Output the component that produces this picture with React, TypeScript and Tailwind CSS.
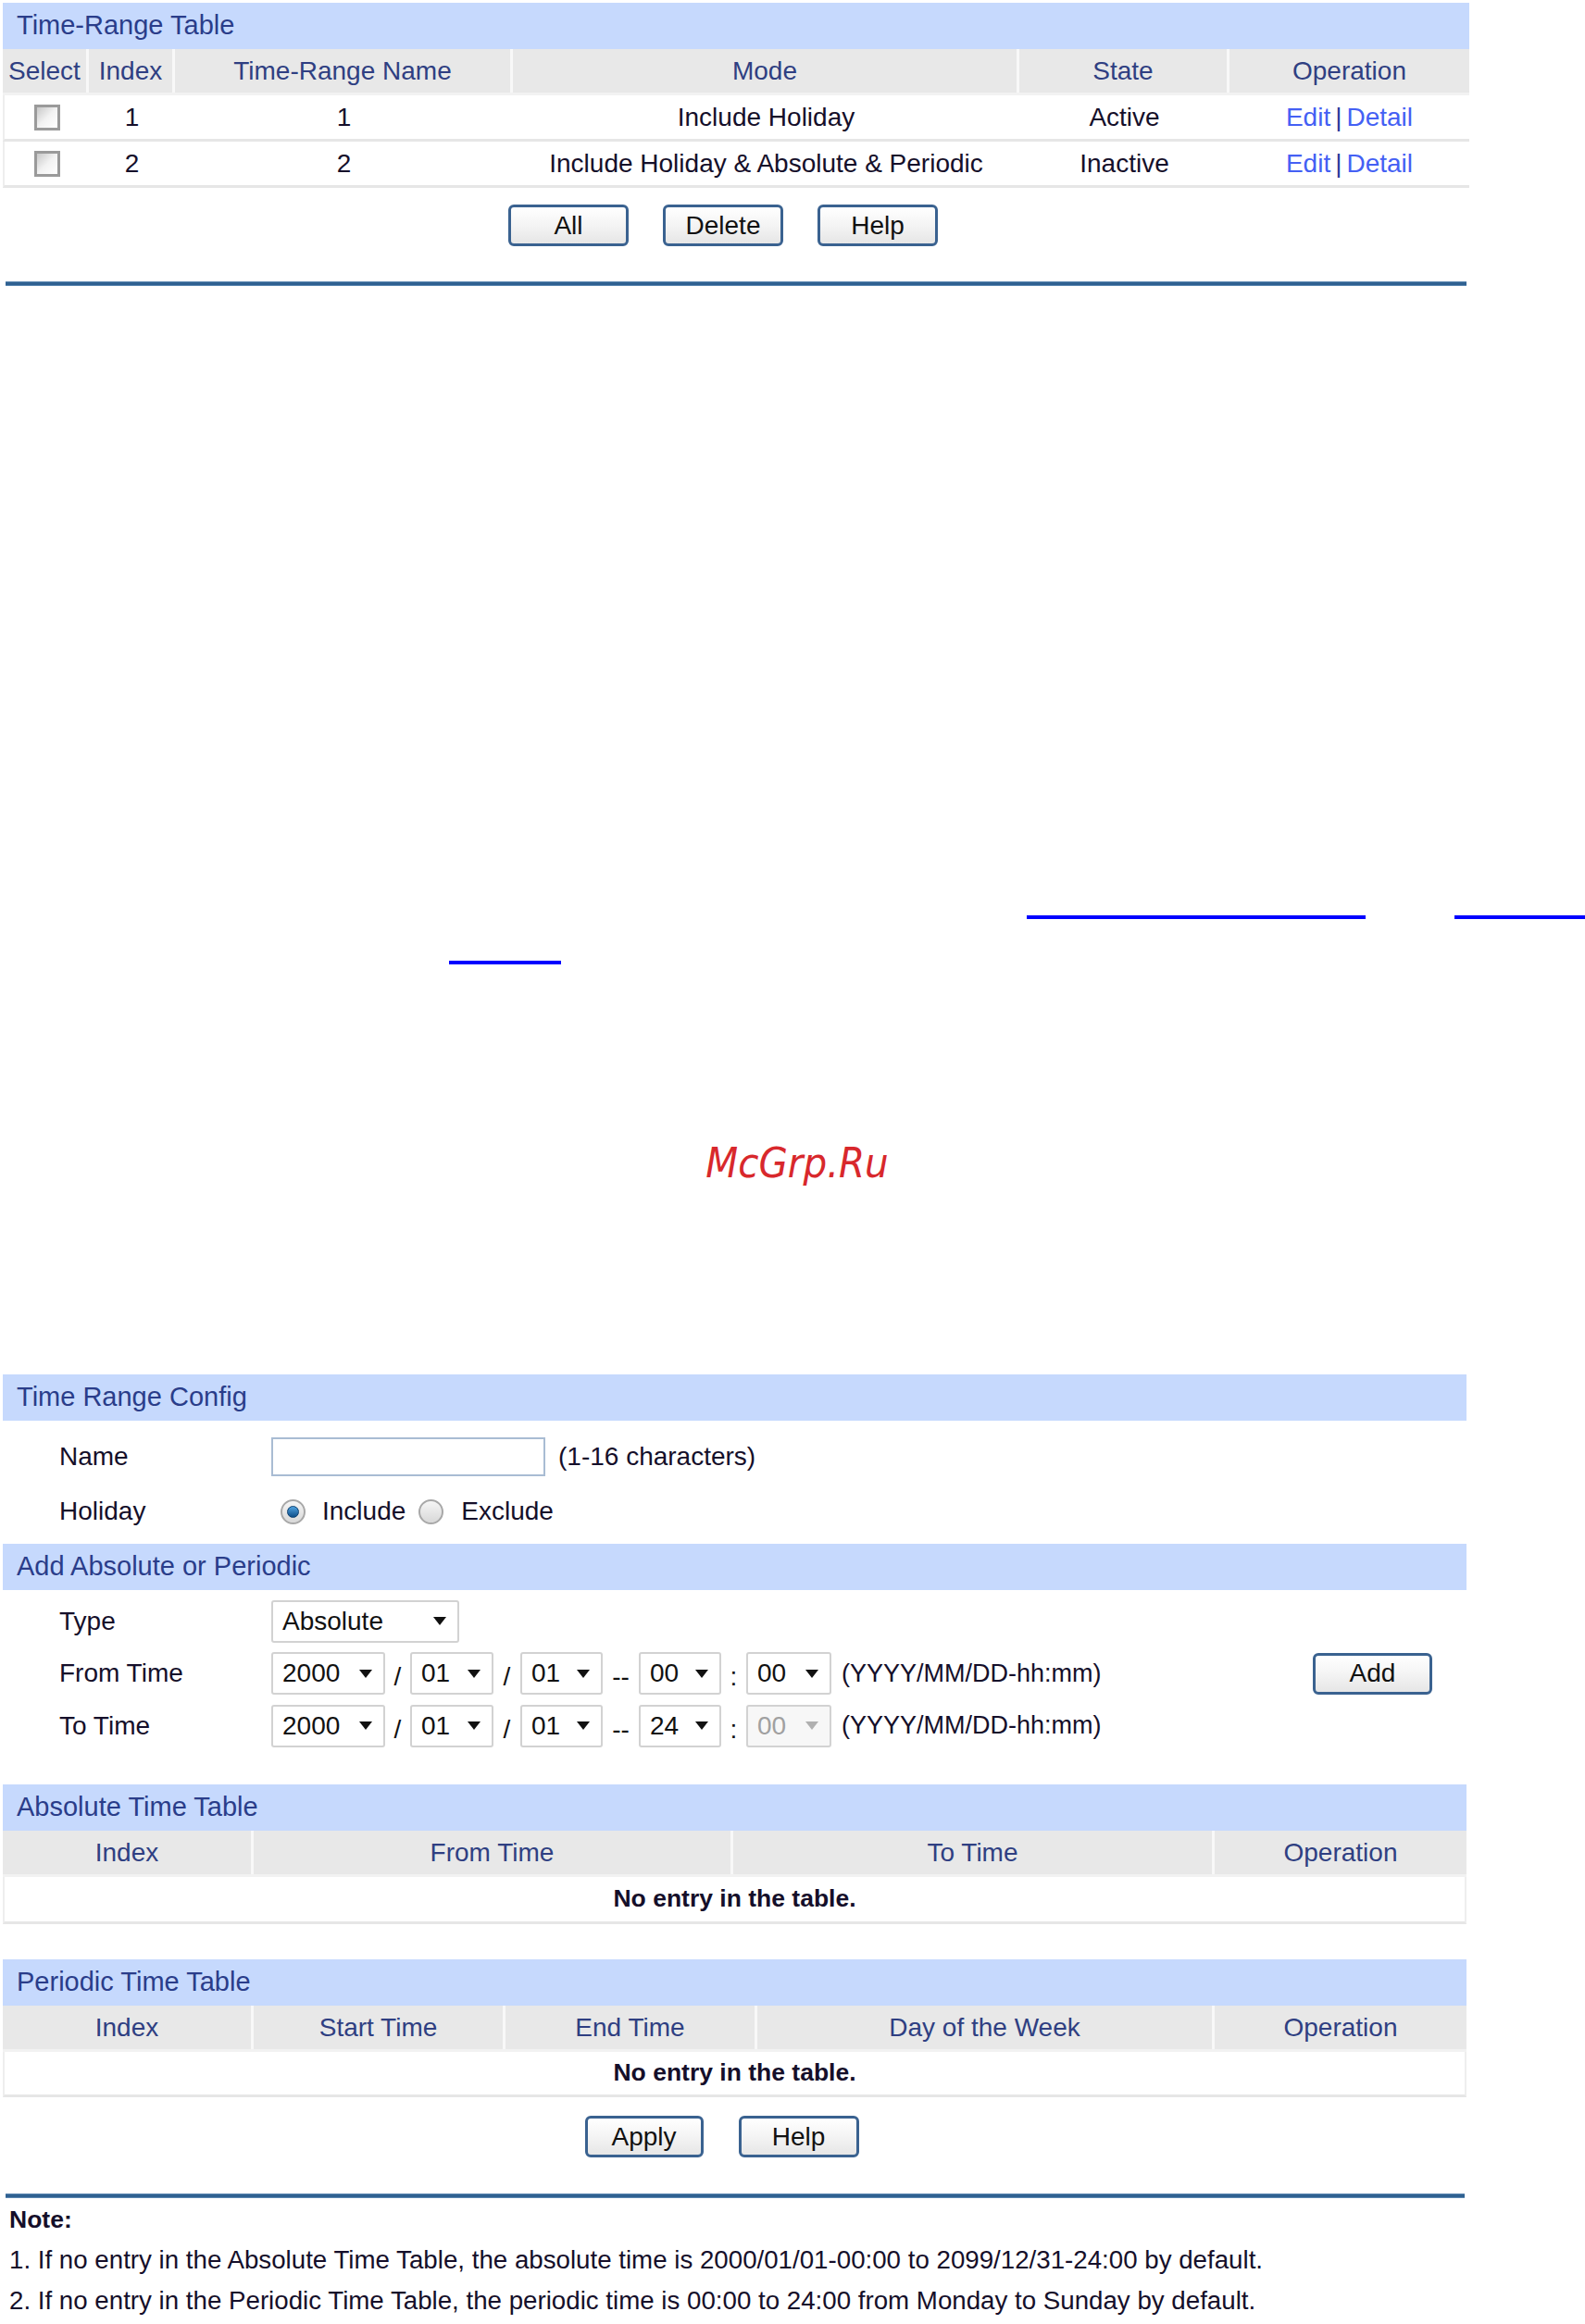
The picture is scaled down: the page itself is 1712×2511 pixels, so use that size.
import React from 'react';

const font = { fontFamily: '"Liberation Sans", Arial, sans-serif' };

function TitleBar({ title }: { title: string }) {
  return (
    <div className="h-[50px] bg-[#c6d9fd] pl-[15px] flex items-center text-[29px] text-[#2a3d8a]">
      {title}
    </div>
  );
}

function Btn({ label, w = 'w-[130px]' }: { label: string; w?: string }) {
  return (
    <div
      className={`${w} h-[45px] rounded-[6px] border-[3px] border-[#3a6290] bg-gradient-to-b from-[#ffffff] via-[#f4f4f4] to-[#e6e6e6] flex items-center justify-center text-[28px] text-[#111]`}
    >
      {label}
    </div>
  );
}

function Checkbox() {
  return (
    <div className="w-[28px] h-[28px] border-[3px] border-[#9a9a9a] bg-gradient-to-br from-[#c8c8c8] via-[#f2f2f2] to-[#ffffff]" />
  );
}

function Radio({ on }: { on?: boolean }) {
  return (
    <div className="w-[27px] h-[27px] rounded-full border-[2px] border-[#a8a8a8] bg-gradient-to-b from-[#f6f6f6] to-[#d8d8d8] flex items-center justify-center">
      {on && <div className="w-[13px] h-[13px] rounded-full bg-gradient-to-b from-[#4fa3e0] to-[#0c4f8a] border border-[#0a3e6e]" />}
    </div>
  );
}

function Select({ value, w, disabled }: { value: string; w: string; disabled?: boolean }) {
  return (
    <div
      className={`${w} h-[46px] rounded-[3px] border-[2px] border-[#d2d2d2] ${disabled ? 'bg-[#f7f7f7] text-[#a0a0a0]' : 'bg-white text-[#111]'} flex items-center justify-between pl-[10px] pr-[12px] text-[28px]`}
    >
      <span>{value}</span>
      <svg width="14" height="9" viewBox="0 0 14 9">
        <path d="M0 0 L14 0 L7 9 Z" fill={disabled ? '#b0b0b0' : '#111'} />
      </svg>
    </div>
  );
}

function Sep({ ch, w }: { ch: string; w: string }) {
  return <div className={`${w} text-center text-[28px] text-[#111] pt-[8px]`}>{ch}</div>;
}

function BlueRule() {
  return <div className="h-[5px] bg-[#2f6191] border-y border-[#5b86b0]" />;
}

export default function App() {
  const rows = [
    { idx: '1', name: '1', mode: 'Include Holiday', state: 'Active' },
    { idx: '2', name: '2', mode: 'Include Holiday & Absolute & Periodic', state: 'Inactive' },
  ];

  return (
    <div className="w-[1712px] h-[2511px] bg-white overflow-hidden" style={font}>
      {/* Time-Range Table */}
      <div className="pt-[3px] pl-[3px] w-[1587px]">
        <TitleBar title="Time-Range Table" />
        <div className="flex h-[50px] bg-[#e8e8e8] text-[28px] text-[#2f3f82] border-b-[3px] border-[#f2f2f2]">
          <div className="w-[93px] flex items-center justify-center border-r-[3px] border-[#f8f8f8]">Select</div>
          <div className="w-[93px] flex items-center justify-center border-r-[3px] border-[#f8f8f8]">Index</div>
          <div className="w-[365px] flex items-center justify-center border-r-[3px] border-[#f8f8f8]">Time-Range Name</div>
          <div className="w-[547px] flex items-center justify-center border-r-[3px] border-[#f8f8f8]">Mode</div>
          <div className="w-[227px] flex items-center justify-center border-r-[3px] border-[#f8f8f8]">State</div>
          <div className="flex-1 flex items-center justify-center">Operation</div>
        </div>
        {rows.map((r) => (
          <div key={r.idx} className="flex h-[50px] text-[28px] text-[#150f2a] border-b-[3px] border-[#e6e6e6] border-l-[2px] border-l-[#eeeeee]">
            <div className="w-[91px] flex items-center justify-center">
              <Checkbox />
            </div>
            <div className="w-[93px] flex items-center justify-center">{r.idx}</div>
            <div className="w-[365px] flex items-center justify-center">{r.name}</div>
            <div className="w-[547px] flex items-center justify-center">{r.mode}</div>
            <div className="w-[227px] flex items-center justify-center">{r.state}</div>
            <div className="flex-1 flex items-center justify-center text-[#4460f4]">
              <span>Edit</span>
              <span className="mx-[5px] text-[#2a3a9a]">|</span>
              <span>Detail</span>
            </div>
          </div>
        ))}
        <div className="flex justify-center gap-[37px] pr-[28px] mt-[18px]">
          <Btn label="All" />
          <Btn label="Delete" />
          <Btn label="Help" />
        </div>
        <div className="mt-[38px] ml-[3px] mr-[3px]">
          <BlueRule />
        </div>
      </div>

      {/* stray link underlines */}
      <div className="mt-[680px] flex">
        <div className="ml-[1109px] w-[366px] h-[4px] bg-[#0000ff]" />
        <div className="ml-[96px] flex-1 h-[4px] bg-[#0000ff]" />
      </div>
      <div className="mt-[45px] ml-[485px] w-[121px] h-[4px] bg-[#0000ff]" />

      {/* watermark */}
      <div
        className="mt-[185px] pl-[10px] text-center text-[45px] italic text-[#d8282c] leading-[60px]"
        style={{ fontFamily: '"DejaVu Sans Condensed", "DejaVu Sans", sans-serif' }}
      >
        McGrp.Ru
      </div>

      {/* Time Range Config */}
      <div className="mt-[198px] ml-[3px] w-[1581px] text-[28px] text-[#150f2a]">
        <TitleBar title="Time Range Config" />
        <div className="mt-[18px] h-[42px] flex items-center pl-[61px]">
          <div className="w-[229px]">Name</div>
          <div className="w-[296px] h-[42px] border-[2px] border-[#a9bcd3] bg-white" />
          <div className="ml-[14px]">(1-16 characters)</div>
        </div>
        <div className="mt-[9px] h-[58px] flex items-center pl-[61px]">
          <div className="w-[239px]">Holiday</div>
          <Radio on />
          <div className="ml-[18px]">Include</div>
          <div className="ml-[14px]">
            <Radio />
          </div>
          <div className="ml-[19px]">Exclude</div>
        </div>
        <div className="mt-[6px]">
          <TitleBar title="Add Absolute or Periodic" />
        </div>
        <div className="mt-[10px] h-[47px] flex items-center pl-[61px]">
          <div className="w-[229px]">Type</div>
          <Select value="Absolute" w="w-[203px]" />
        </div>
        <div className="mt-[10px] h-[46px] flex items-center pl-[61px]">
          <div className="w-[229px]">From Time</div>
          <Select value="2000" w="w-[123px]" />
          <Sep ch="/" w="w-[27px]" />
          <Select value="01" w="w-[90px]" />
          <Sep ch="/" w="w-[29px]" />
          <Select value="01" w="w-[89px]" />
          <Sep ch="--" w="w-[39px]" />
          <Select value="00" w="w-[89px]" />
          <Sep ch=":" w="w-[27px]" />
          <Select value="00" w="w-[92px]" />
          <div className="ml-[11px] text-[27px]">(YYYY/MM/DD-hh:mm)</div>
          <div className="ml-auto mr-[37px]">
            <Btn label="Add" w="w-[129px]" />
          </div>
        </div>
        <div className="mt-[10px] h-[47px] flex items-center pl-[61px]">
          <div className="w-[229px]">To Time</div>
          <Select value="2000" w="w-[123px]" />
          <Sep ch="/" w="w-[27px]" />
          <Select value="01" w="w-[90px]" />
          <Sep ch="/" w="w-[29px]" />
          <Select value="01" w="w-[89px]" />
          <Sep ch="--" w="w-[39px]" />
          <Select value="24" w="w-[89px]" />
          <Sep ch=":" w="w-[27px]" />
          <Select value="00" w="w-[92px]" disabled />
          <div className="ml-[11px] text-[27px]">(YYYY/MM/DD-hh:mm)</div>
        </div>

        {/* Absolute Time Table */}
        <div className="mt-[40px]">
          <TitleBar title="Absolute Time Table" />
          <div className="flex h-[50px] bg-[#e8e8e8] text-[28px] text-[#2f3f82] border-b-[3px] border-[#f2f2f2]">
            <div className="w-[271px] flex items-center justify-center border-r-[3px] border-[#f8f8f8]">Index</div>
            <div className="w-[518px] flex items-center justify-center border-r-[3px] border-[#f8f8f8]">From Time</div>
            <div className="w-[520px] flex items-center justify-center border-r-[3px] border-[#f8f8f8]">To Time</div>
            <div className="flex-1 flex items-center justify-center">Operation</div>
          </div>
          <div className="h-[51px] flex items-center justify-center font-bold text-[26.5px] border-b-[3px] border-[#e6e6e6] border-x-[2px] border-x-[#eeeeee]">
            No entry in the table.
          </div>
        </div>

        {/* Periodic Time Table */}
        <div className="mt-[38px]">
          <TitleBar title="Periodic Time Table" />
          <div className="flex h-[50px] bg-[#e8e8e8] text-[28px] text-[#2f3f82] border-b-[3px] border-[#f2f2f2]">
            <div className="w-[271px] flex items-center justify-center border-r-[3px] border-[#f8f8f8]">Index</div>
            <div className="w-[272px] flex items-center justify-center border-r-[3px] border-[#f8f8f8]">Start Time</div>
            <div className="w-[272px] flex items-center justify-center border-r-[3px] border-[#f8f8f8]">End Time</div>
            <div className="w-[494px] flex items-center justify-center border-r-[3px] border-[#f8f8f8]">Day of the Week</div>
            <div className="flex-1 flex items-center justify-center">Operation</div>
          </div>
          <div className="h-[49px] flex items-center justify-center font-bold text-[26.5px] border-b-[3px] border-[#e6e6e6] border-x-[2px] border-x-[#eeeeee]">
            No entry in the table.
          </div>
        </div>

        <div className="mt-[20px] flex justify-center gap-[38px] pr-[28px]">
          <Btn label="Apply" w="w-[128px]" />
          <Btn label="Help" />
        </div>
        <div className="mt-[39px] ml-[3px] mr-[2px]">
          <BlueRule />
        </div>
        <div className="mt-[6px] ml-[7px] font-bold text-[26.5px] leading-[34px]">Note:</div>
        <div className="mt-[10px] ml-[7px] text-[27.7px] leading-[34px]">
          1. If no entry in the Absolute Time Table, the absolute time is 2000/01/01-00:00 to 2099/12/31-24:00 by default.
        </div>
        <div className="mt-[10px] ml-[7px] text-[27.7px] leading-[34px]">
          2. If no entry in the Periodic Time Table, the periodic time is 00:00 to 24:00 from Monday to Sunday by default.
        </div>
      </div>
    </div>
  );
}
